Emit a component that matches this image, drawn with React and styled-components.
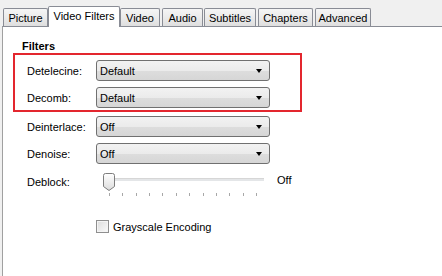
import React from 'react';
import styled, { createGlobalStyle } from 'styled-components';

const GlobalStyle = createGlobalStyle`
  html, body {
    margin: 0;
    padding: 0;
    background: #f0f0f0;
  }
  body {
    font-family: "Liberation Sans", Arial, sans-serif;
    font-size: 11px;
    color: #000;
  }
`;

const Window = styled.div`
  width: 442px;
  height: 276px;
  padding-top: 6px;
  box-sizing: border-box;
  overflow: hidden;
  display: flex;
  flex-direction: column;
`;

const TabBar = styled.div`
  display: flex;
  align-items: flex-end;
  height: 20px;
  padding-left: 3px;
  position: relative;
  z-index: 1;
`;

const Tab = styled.div`
  box-sizing: border-box;
  width: ${(p) => p.$w}px;
  margin-left: ${(p) => p.$gap || 0}px;
  height: ${(p) => (p.$active ? 21 : 18)}px;
  margin-bottom: ${(p) => (p.$active ? -1 : 0)}px;
  border: 1px solid #898c95;
  border-bottom: none;
  border-radius: 2px 2px 0 0;
  background: ${(p) =>
    p.$active ? '#fff' : 'linear-gradient(#f5f5f5 0%, #ebebeb 50%, #dedede 100%)'};
  display: flex;
  align-items: center;
  justify-content: center;
  padding-bottom: ${(p) => (p.$active ? 3 : 0)}px;
  white-space: nowrap;
`;

const Panel = styled.div`
  flex: 1;
  margin-left: 2px;
  background: #fff;
  border-top: 1px solid #898c95;
  border-left: 1px solid #a0a0a0;
  padding-left: 24px;
`;

const Heading = styled.div`
  font-weight: bold;
  height: 13px;
  line-height: 13px;
  margin-top: 13px;
  margin-left: -5px;
`;

const Highlight = styled.div`
  width: 289px;
  box-sizing: border-box;
  margin-left: -14px;
  padding: 5px 0 2px 12px;
  border: 2px solid #e3262e;
  display: flex;
  flex-direction: column;
  gap: 6px;
`;

const Rows = styled.div`
  display: flex;
  flex-direction: column;
  gap: 6px;
  margin-top: 4px;
`;

const Row = styled.div`
  display: grid;
  grid-template-columns: 69px auto;
  align-items: center;
`;

const Label = styled.span`
  white-space: nowrap;
`;

const Combo = styled.div`
  box-sizing: border-box;
  width: 174px;
  height: 21px;
  border: 1px solid #707070;
  border-radius: 3px;
  background: linear-gradient(#f2f2f2 0%, #ebebeb 50%, #dddddd 51%, #d6d6d6 100%);
  display: flex;
  align-items: center;
  justify-content: space-between;
  padding: 0 7px 0 3px;
`;

const Arrow = styled.span`
  width: 0;
  height: 0;
  border-left: 3.5px solid transparent;
  border-right: 3.5px solid transparent;
  border-top: 4px solid #000;
`;

const SliderRow = styled.div`
  display: grid;
  grid-template-columns: 76px 174px auto;
  margin-top: 9px;
  height: 26px;
`;

const SliderLabel = styled.span`
  padding-top: 3px;
`;

const Slider = styled.div`
  position: relative;
  height: 26px;
`;

const Track = styled.div`
  position: absolute;
  left: 7px;
  right: 13px;
  top: 5px;
  height: 2px;
  background: #e4e6e8;
  border-top: 1px solid #d6d6d6;
`;

const Thumb = styled.svg`
  position: absolute;
  left: 0;
  top: 0;
`;

const Ticks = styled.div`
  position: absolute;
  left: 6px;
  top: 20px;
  width: 148px;
  display: flex;
  justify-content: space-between;
`;

const Tick = styled.span`
  width: 1px;
  height: 3px;
  background: #a7a7a7;
`;

const SliderValue = styled.span`
  padding-top: 1px;
`;

const CheckRow = styled.label`
  display: flex;
  align-items: center;
  gap: 4px;
  margin-top: 21px;
  margin-left: 69px;
`;

const Box = styled.span`
  box-sizing: border-box;
  width: 13px;
  height: 13px;
  border: 1px solid #8f8f8f;
  background: linear-gradient(135deg, #dcdcdc, #fafafa);
  box-shadow: inset 0 0 0 1px #f4f4f4;
`;

const tabs = [
  { name: 'Picture', w: 45 },
  { name: 'Video Filters', w: 72, active: true, gap: 0 },
  { name: 'Video', w: 40 },
  { name: 'Audio', w: 41, gap: 2 },
  { name: 'Subtitles', w: 52, gap: 1 },
  { name: 'Chapters', w: 55, gap: 2 },
  { name: 'Advanced', w: 56, gap: 2 },
];

const ComboRow = ({ label, value }) => (
  <Row>
    <Label>{label}</Label>
    <Combo>
      <span>{value}</span>
      <Arrow />
    </Combo>
  </Row>
);

export default function App() {
  return (
    <>
      <GlobalStyle />
      <Window>
        <TabBar>
          {tabs.map((t) => (
            <Tab key={t.name} $w={t.w} $active={t.active} $gap={t.gap}>
              {t.name}
            </Tab>
          ))}
        </TabBar>
        <Panel>
          <Heading>Filters</Heading>
          <Highlight>
            <ComboRow label="Detelecine:" value="Default" />
            <ComboRow label="Decomb:" value="Default" />
          </Highlight>
          <Rows>
            <ComboRow label="Deinterlace:" value="Off" />
            <ComboRow label="Denoise:" value="Off" />
          </Rows>
          <SliderRow>
            <SliderLabel>Deblock:</SliderLabel>
            <Slider>
              <Track />
              <Thumb width="12" height="19" viewBox="0 0 12 19">
                <defs>
                  <linearGradient id="tg" x1="0" x2="0" y1="0" y2="1">
                    <stop offset="0" stopColor="#ffffff" />
                    <stop offset="1" stopColor="#dcdcdc" />
                  </linearGradient>
                </defs>
                <path
                  d="M0.5 2.5 Q0.5 0.5 2.5 0.5 H9.5 Q11.5 0.5 11.5 2.5 V13.5 L6 17.5 L0.5 13.5 Z"
                  fill="url(#tg)"
                  stroke="#7d7d7d"
                />
              </Thumb>
              <Ticks>
                {Array.from({ length: 12 }).map((_, i) => (
                  <Tick key={i} />
                ))}
              </Ticks>
            </Slider>
            <SliderValue>Off</SliderValue>
          </SliderRow>
          <CheckRow>
            <Box />
            <span>Grayscale Encoding</span>
          </CheckRow>
        </Panel>
      </Window>
    </>
  );
}
